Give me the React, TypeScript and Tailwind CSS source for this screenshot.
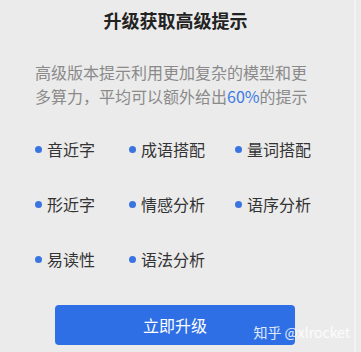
const items = ["音近字", "成语搭配", "量词搭配", "形近字", "情感分析", "语序分析", "易读性", "语法分析"];

export default function App() {
  return (
    <div
      className="relative h-[352px] w-[361px] overflow-hidden bg-[#ebebeb]"
      style={{ fontFamily: '"Noto Sans CJK SC", "Noto Sans", sans-serif' }}
    >
      <div className="absolute right-[5px] top-0 h-full w-[2px] bg-[#f3f3f3]" />
      <h1 className="pt-[8px] pr-[10px] text-center text-[18px] leading-[24px] font-bold text-[#222]">
        升级获取高级提示
      </h1>
      <p className="mt-[28px] w-[317px] pl-[35px] text-[16px] leading-[24px] text-[#8a8a8a]">
        高级版本提示利用更加复杂的模型和更多算力，平均可以额外给出
        <span className="text-[#3d7ae6]">60%</span>的提示
      </p>
      <div className="mt-[29px] grid grid-cols-[94px_106px_auto] gap-y-[31px] pl-[35px]">
        {items.map((item) => (
          <div key={item} className="flex items-center gap-[5px] text-[16px] leading-[24px] text-[#333]">
            <span className="h-[7px] w-[7px] rounded-full bg-[#3a74e0]" />
            {item}
          </div>
        ))}
      </div>
      <button className="mt-[34px] ml-[55px] flex h-[40px] w-[240px] items-center justify-center rounded-[4px] bg-[#2f6fe6] text-[16px] text-white">
        立即升级
      </button>
      <span className="absolute right-[11px] top-[320px] text-[14px] leading-[24px] text-white/85">
        知乎 @xlrocket
      </span>
    </div>
  );
}
